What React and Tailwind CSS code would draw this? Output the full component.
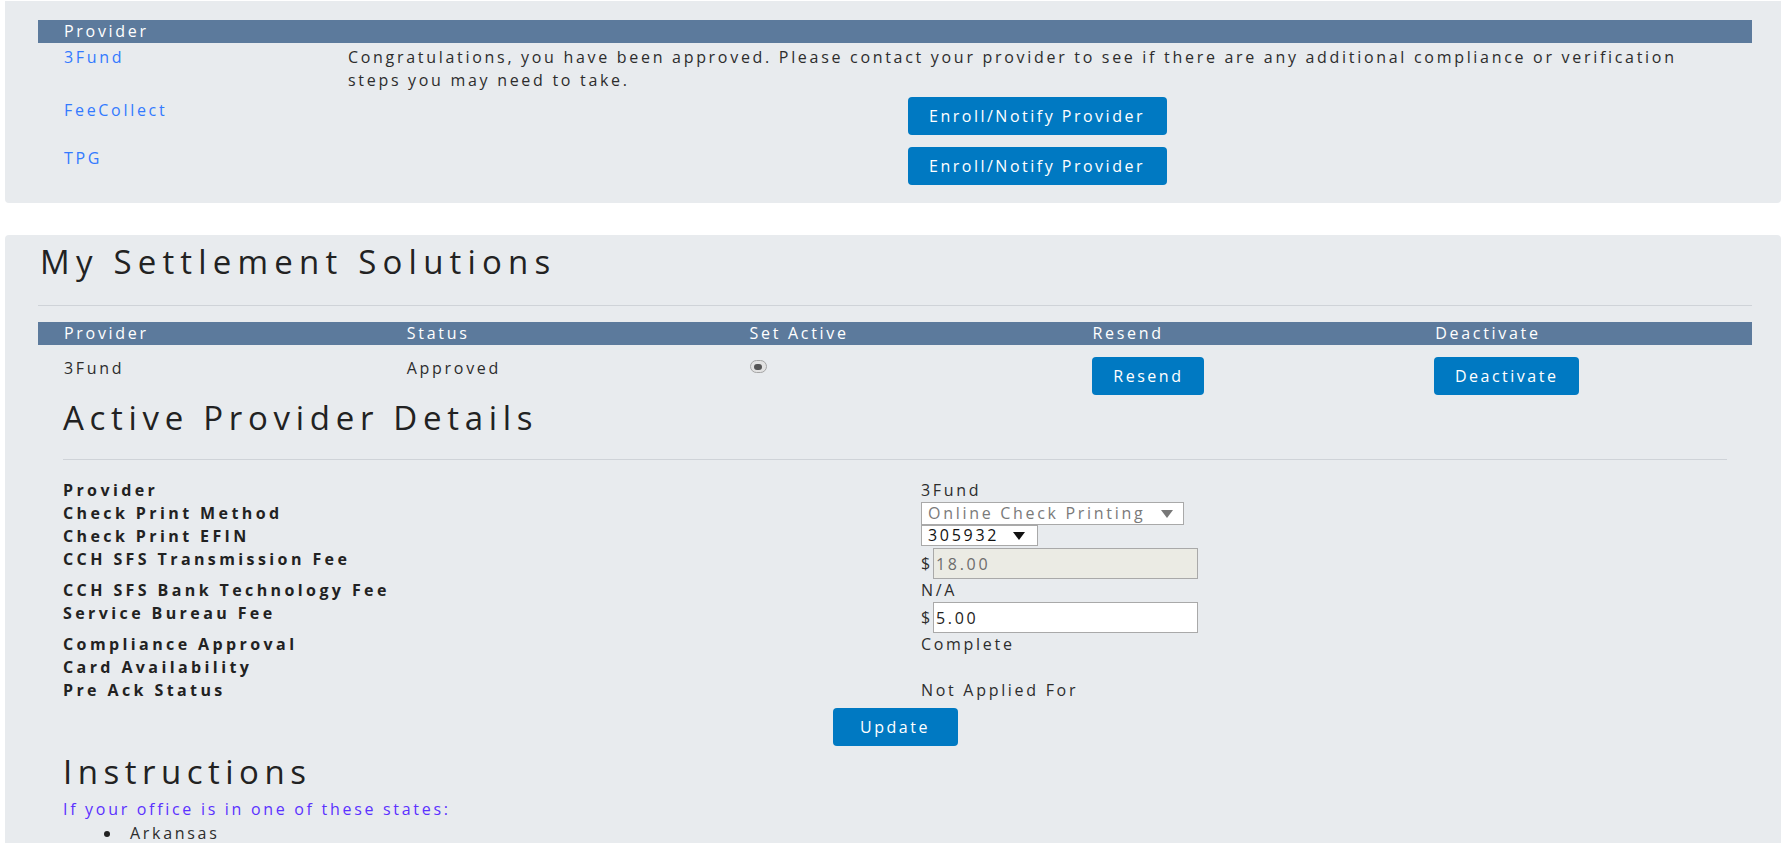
import React from 'react';

const txt = "text-[16px] leading-[23px] tracking-[2.7px]";
const head = "text-[33px] leading-[38px] font-medium text-[#222]";
const btn = "h-[38px] rounded-[4px] bg-[#0079c2] text-white text-[16px] font-medium tracking-[2.5px] flex items-center justify-center shrink-0";

const Arrow = ({ color }) => (
  <svg width="12" height="8" viewBox="0 0 12 8" className="shrink-0">
    <polygon points="0,0 12,0 6,8" fill={color} />
  </svg>
);

const Label = ({ children }) => (
  <div className="text-[16px] leading-[23px] tracking-[3.4px] font-bold text-[#222]">{children}</div>
);

const Money = ({ value, disabled }) => (
  <div className="flex items-center">
    <span className="w-[12px] text-[16px] leading-[23px]">$</span>
    <input
      readOnly
      value={value}
      className={`w-[265px] h-[31px] border border-[#a9a9a9] px-[2px] outline-none ${txt} ${disabled ? 'bg-[#ebebe4] text-[#6d6d6d]' : 'bg-white text-[#222]'}`}
    />
  </div>
);

const SettlementPage = () => {
  const details = [
    ['Provider', <div className={txt}>3Fund</div>],
    ['Check Print Method', (
      <div className="w-[263px] h-[23px] border border-[#a9a9a9] bg-white flex items-center justify-between pl-[6px] pr-[10px]">
        <span className={`${txt} text-[#7a7a7a]`}>Online Check Printing</span>
        <Arrow color="#777" />
      </div>
    )],
    ['Check Print EFIN', (
      <div className="w-[117px] h-[21px] border border-[#a9a9a9] bg-white flex items-center justify-between pl-[6px] pr-[12px]">
        <span className={`${txt} text-[#111] leading-[19px]`}>305932</span>
        <Arrow color="#111" />
      </div>
    )],
    ['CCH SFS Transmission Fee', <Money value="18.00" disabled />],
    ['CCH SFS Bank Technology Fee', <div className={txt}>N/A</div>],
    ['Service Bureau Fee', <Money value="5.00" />],
    ['Compliance Approval', <div className={txt}>Complete</div>],
    ['Card Availability', <div className="h-[23px]"></div>],
    ['Pre Ack Status', <div className={txt}>Not Applied For</div>],
  ];

  return (
    <div className="min-h-screen bg-white overflow-hidden font-['Open_Sans',sans-serif] text-[#2d2d2d]">
      {/* Providers */}
      <div className="mt-[1px] ml-[5px] bg-[#e8ebee] rounded-b-[4px] pt-[19px] pl-[33px] pr-[29px] pb-[18px]">
        <div className={`h-[23px] bg-[#5c7a9c] text-white pl-[26px] ${txt}`}>Provider</div>
        <div className="grid grid-cols-[284px_1fr] pt-[3px]">
          <a className={`pl-[26px] text-[#337aff] ${txt}`}>3Fund</a>
          <p className={`pl-[26px] max-w-[1386px] ${txt}`}>
            Congratulations, you have been approved. Please contact your provider to see if there are any additional compliance or verification steps you may need to take.
          </p>
        </div>
        <div className="grid grid-cols-[284px_1fr] mt-[5px]">
          <a className={`pl-[26px] pt-[2px] text-[#337aff] ${txt}`}>FeeCollect</a>
          <div className="px-[26px] flex justify-center">
            <button className={`${btn} w-[259px]`}>Enroll/Notify Provider</button>
          </div>
        </div>
        <div className="grid grid-cols-[284px_1fr] mt-[12px]">
          <a className={`pl-[26px] text-[#337aff] ${txt}`}>TPG</a>
          <div className="px-[26px] flex justify-center">
            <button className={`${btn} w-[259px]`}>Enroll/Notify Provider</button>
          </div>
        </div>
      </div>

      {/* My Settlement Solutions */}
      <div className="mt-[32px] ml-[5px] bg-[#e8ebee] rounded-t-[4px] pt-[8px] pl-[33px] pr-[29px] pb-[40px]">
        <h1 className={`${head} tracking-[6.2px] ml-[2px]`}>My Settlement Solutions</h1>
        <div className="mt-[24px] h-[1px] bg-[#cfd3d8]"></div>
        <div className={`mt-[16px] h-[23px] bg-[#5c7a9c] text-white grid grid-cols-5 ${txt}`}>
          <div className="pl-[26px]">Provider</div>
          <div className="pl-[26px]">Status</div>
          <div className="pl-[26px]">Set Active</div>
          <div className="pl-[26px]">Resend</div>
          <div className="pl-[26px]">Deactivate</div>
        </div>
        <div className="grid grid-cols-5 pt-[12px]">
          <div className={`pl-[26px] ${txt}`}>3Fund</div>
          <div className={`pl-[26px] ${txt}`}>Approved</div>
          <div className="pl-[26px] pt-[3px]">
            <span className="w-[17px] h-[13px] rounded-full border border-[#a6a6a6] bg-[#e2e2e2] flex items-center justify-center">
              <span className="w-[8px] h-[6px] rounded-full bg-[#555]"></span>
            </span>
          </div>
          <div className="pl-[26px]">
            <button className={`${btn} w-[112px]`}>Resend</button>
          </div>
          <div className="pl-[25px]">
            <button className={`${btn} w-[145px]`}>Deactivate</button>
          </div>
        </div>

        <div className="px-[25px]">
          <h2 className={`${head} tracking-[5.7px] mt-[4px]`}>Active Provider Details</h2>
          <div className="mt-[22px] h-[1px] bg-[#cfd3d8]"></div>
          <div className="mt-[19px] grid grid-cols-[858px_1fr] items-start">
            {details.map(([label, value]) => (
              <React.Fragment key={label}>
                <Label>{label}</Label>
                <div>{value}</div>
              </React.Fragment>
            ))}
          </div>
          <div className="mt-[6px] flex justify-center">
            <button className={`${btn} w-[125px]`}>Update</button>
          </div>
          <h2 className={`${head} tracking-[5.5px] mt-[7px]`}>Instructions</h2>
          <p className={`mt-[7px] text-[#5b32ff] ${txt}`}>If your office is in one of these states:</p>
          <ul className="mt-[1px]">
            <li className={`flex items-center ${txt}`}>
              <span className="ml-[41px] w-[6px] h-[6px] rounded-full bg-[#222]"></span>
              <span className="ml-[20px]">Arkansas</span>
            </li>
          </ul>
        </div>
      </div>
    </div>
  );
};

export default SettlementPage;
